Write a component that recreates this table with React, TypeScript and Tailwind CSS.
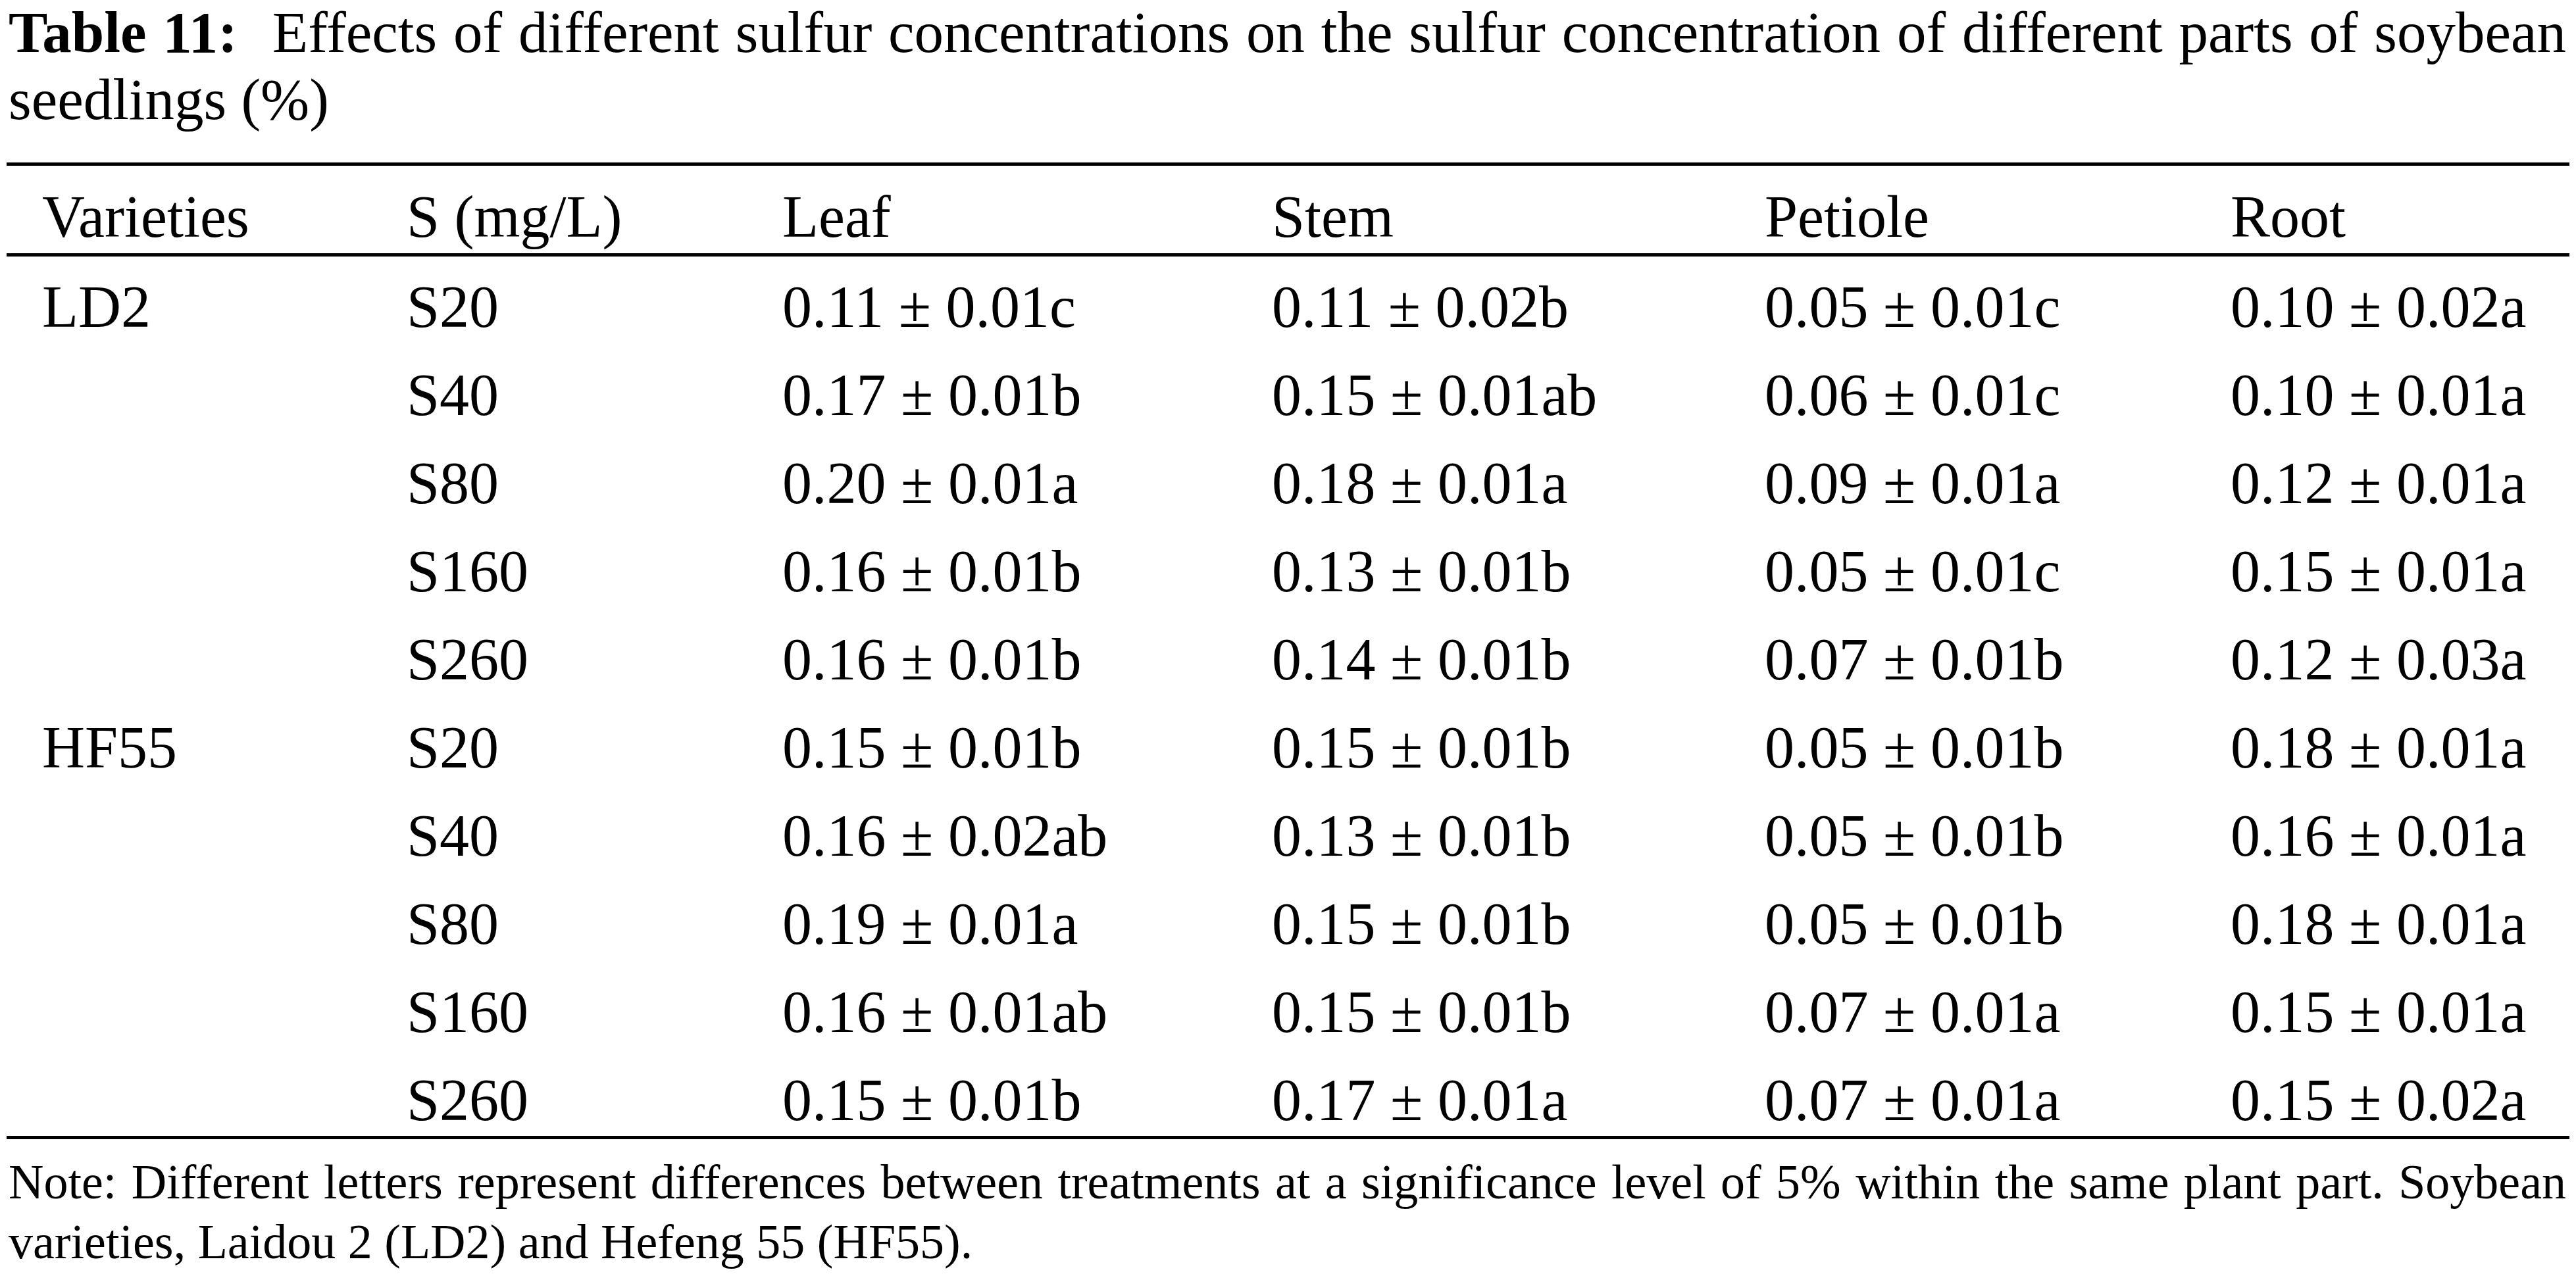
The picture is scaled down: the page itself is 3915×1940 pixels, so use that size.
const cols =
  "grid grid-cols-[554px_571px_744px_749px_708px_1fr] pl-[54px]";

type Row = {
  variety?: string;
  s: string;
  leaf: string;
  stem: string;
  petiole: string;
  root: string;
};

const rows: Row[] = [
  { variety: "LD2", s: "S20", leaf: "0.11 ± 0.01c", stem: "0.11 ± 0.02b", petiole: "0.05 ± 0.01c", root: "0.10 ± 0.02a" },
  { s: "S40", leaf: "0.17 ± 0.01b", stem: "0.15 ± 0.01ab", petiole: "0.06 ± 0.01c", root: "0.10 ± 0.01a" },
  { s: "S80", leaf: "0.20 ± 0.01a", stem: "0.18 ± 0.01a", petiole: "0.09 ± 0.01a", root: "0.12 ± 0.01a" },
  { s: "S160", leaf: "0.16 ± 0.01b", stem: "0.13 ± 0.01b", petiole: "0.05 ± 0.01c", root: "0.15 ± 0.01a" },
  { s: "S260", leaf: "0.16 ± 0.01b", stem: "0.14 ± 0.01b", petiole: "0.07 ± 0.01b", root: "0.12 ± 0.03a" },
  { variety: "HF55", s: "S20", leaf: "0.15 ± 0.01b", stem: "0.15 ± 0.01b", petiole: "0.05 ± 0.01b", root: "0.18 ± 0.01a" },
  { s: "S40", leaf: "0.16 ± 0.02ab", stem: "0.13 ± 0.01b", petiole: "0.05 ± 0.01b", root: "0.16 ± 0.01a" },
  { s: "S80", leaf: "0.19 ± 0.01a", stem: "0.15 ± 0.01b", petiole: "0.05 ± 0.01b", root: "0.18 ± 0.01a" },
  { s: "S160", leaf: "0.16 ± 0.01ab", stem: "0.15 ± 0.01b", petiole: "0.07 ± 0.01a", root: "0.15 ± 0.01a" },
  { s: "S260", leaf: "0.15 ± 0.01b", stem: "0.17 ± 0.01a", petiole: "0.07 ± 0.01a", root: "0.15 ± 0.02a" },
];

export default function App() {
  return (
    <div className="min-h-screen bg-white text-black font-['Liberation_Serif','Times_New_Roman',serif]">
      <div className="ml-[10px] w-[3895px]">
        {/* caption */}
        <div className="pl-[3px] pr-[5px] text-[89px]">
          <div className="leading-[99px] whitespace-nowrap text-justify [text-align-last:justify]">
            <span className="font-bold mr-[28px]">Table 11:</span> Effects of different sulfur concentrations on the sulfur concentration of different parts of soybean
          </div>
          <div className="leading-[104px]">seedlings (%)</div>
        </div>

        {/* table */}
        <div className="mt-[44px] h-[5px] bg-black" />
        <div className={`${cols} pt-[28px] pb-[5px] text-[90px] leading-[100px]`}>
          <div>Varieties</div>
          <div>S (mg/L)</div>
          <div>Leaf</div>
          <div>Stem</div>
          <div>Petiole</div>
          <div>Root</div>
        </div>
        <div className="h-[5px] bg-black" />
        <div className="flex flex-col gap-y-[34px] pt-[27px] pb-[4px] text-[90px] leading-[100px] whitespace-nowrap">
          {rows.map((r, i) => (
            <div key={i} className={cols}>
              <div>{r.variety ?? ""}</div>
              <div>{r.s}</div>
              <div>{r.leaf}</div>
              <div>{r.stem}</div>
              <div>{r.petiole}</div>
              <div>{r.root}</div>
            </div>
          ))}
        </div>
        <div className="h-[5px] bg-black" />

        {/* note */}
        <div className="mt-[20px] pl-[3px] pr-[5px] text-[74px] leading-[91px]">
          <div className="whitespace-nowrap text-justify [text-align-last:justify]">
            Note: Different letters represent differences between treatments at a significance level of 5% within the same plant part. Soybean
          </div>
          <div>varieties, Laidou 2 (LD2) and Hefeng 55 (HF55).</div>
        </div>
      </div>
    </div>
  );
}
